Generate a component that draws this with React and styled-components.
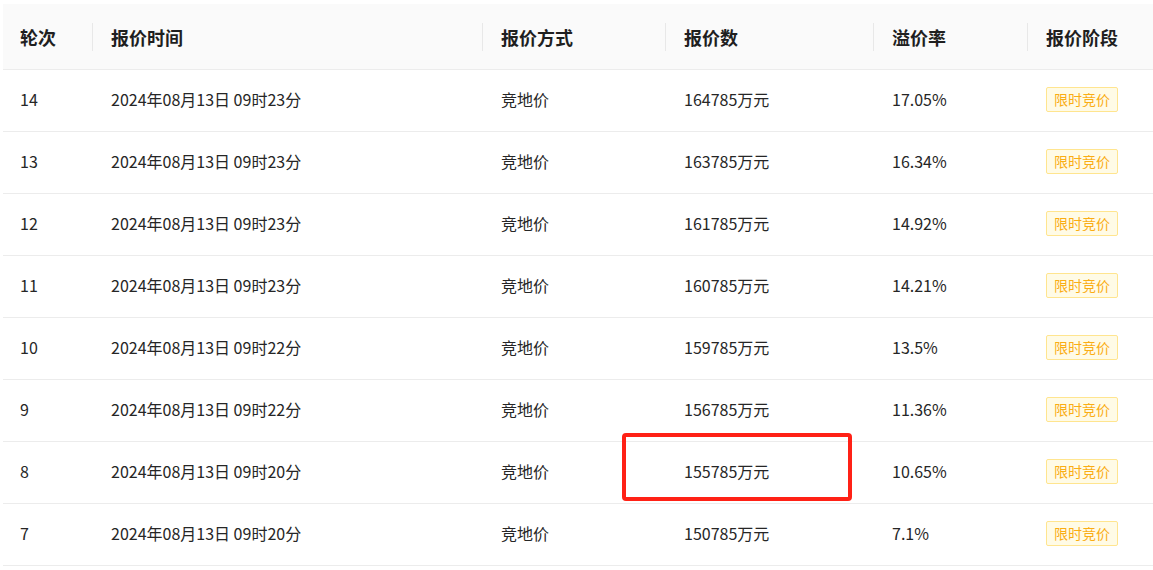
import React from "react";
import styled, { createGlobalStyle } from "styled-components";

const Global = createGlobalStyle`
  html, body { margin: 0; padding: 0; background: #fff; }
  body { font-family: "Noto Sans CJK SC", "Noto Sans", sans-serif; }
`;

const Wrap = styled.div`
  padding: 4px 0 0 3px;
`;

const Table = styled.table`
  width: 1150px;
  border-collapse: collapse;
  table-layout: fixed;
  color: #262626;
`;

const Th = styled.th`
  position: relative;
  height: 65px;
  padding: 0 0 0 ${p => (p.$first ? 17 : 18)}px;
  background: #fafafa;
  border-bottom: 1px solid #ececec;
  text-align: left;
  font-size: 18px;
  font-weight: 700;
  color: #1f1f1f;
  &::before {
    content: "";
    display: ${p => (p.$first ? "none" : "block")};
    position: absolute;
    left: -1px;
    top: 50%;
    width: 1px;
    height: 28px;
    transform: translateY(-50%);
    background: #e8e8e8;
  }
`;

const Td = styled.td`
  position: relative;
  height: 58px;
  padding: 0 0 3px ${p => (p.$first ? 17 : 18)}px;
  border-bottom: 1px solid #ececec;
  font-size: 16px;
  line-height: 24px;
  white-space: nowrap;
`;

const Tag = styled.span`
  display: inline-flex;
  align-items: center;
  height: 23px;
  padding: 0 7px;
  border: 1px solid #ffe58f;
  border-radius: 2px;
  background: #fffbe6;
  color: #faad14;
  font-size: 14px;
  line-height: 22px;
`;

const Highlight = styled.div`
  position: absolute;
  left: -44px;
  top: -9px;
  width: 222px;
  height: 60px;
  border: 4px solid #ff2116;
  border-radius: 4px;
  pointer-events: none;
`;

const cols = [90, 390, 183, 208, 154, 125];
const heads = ["轮次", "报价时间", "报价方式", "报价数", "溢价率", "报价阶段"];

const rows = [
  ["14", "2024年08月13日 09时23分", "164785万元", "17.05%"],
  ["13", "2024年08月13日 09时23分", "163785万元", "16.34%"],
  ["12", "2024年08月13日 09时23分", "161785万元", "14.92%"],
  ["11", "2024年08月13日 09时23分", "160785万元", "14.21%"],
  ["10", "2024年08月13日 09时22分", "159785万元", "13.5%"],
  ["9", "2024年08月13日 09时22分", "156785万元", "11.36%"],
  ["8", "2024年08月13日 09时20分", "155785万元", "10.65%", true],
  ["7", "2024年08月13日 09时20分", "150785万元", "7.1%"],
];

export default function App() {
  return (
    <Wrap>
      <Global />
      <Table>
        <colgroup>
          {cols.map((w, i) => (
            <col key={i} style={{ width: w }} />
          ))}
        </colgroup>
        <thead>
          <tr>
            {heads.map((h, i) => (
              <Th key={h} $first={i === 0}>
                {h}
              </Th>
            ))}
          </tr>
        </thead>
        <tbody>
          {rows.map(([n, t, price, rate, hl]) => (
            <tr key={n}>
              <Td $first>{n}</Td>
              <Td>{t}</Td>
              <Td>竞地价</Td>
              <Td>
                {hl && <Highlight />}
                {price}
              </Td>
              <Td>{rate}</Td>
              <Td>
                <Tag>限时竞价</Tag>
              </Td>
            </tr>
          ))}
        </tbody>
      </Table>
    </Wrap>
  );
}
